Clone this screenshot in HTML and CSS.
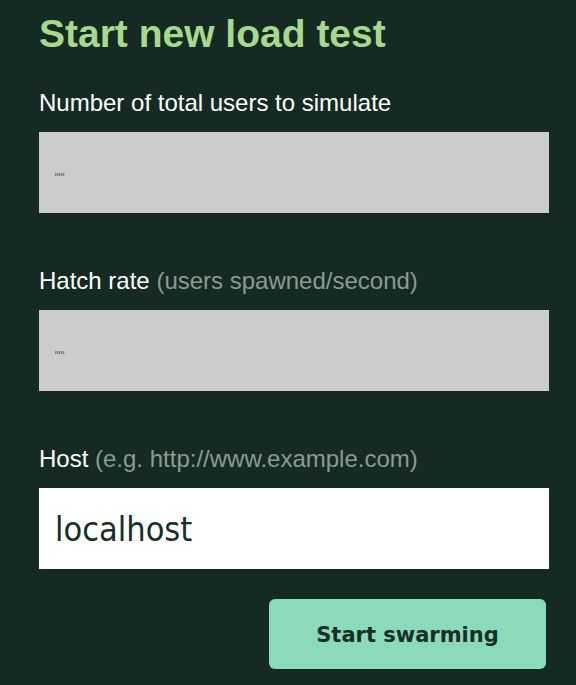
FILE: index.html
```html
<!DOCTYPE html>
<html>
<head>
<meta charset="utf-8">
<link rel="stylesheet" href="styles.css">
</head>
<body>
<form class="form">
  <h2 class="title">Start new load test</h2>
  <label class="label label-first">Number of total users to simulate</label>
  <div class="field field-grey"><span class="tiny"></span></div>
  <label class="label">Hatch rate <span class="hint">(users spawned/second)</span></label>
  <div class="field field-grey"><span class="tiny"></span></div>
  <label class="label">Host <span class="hint">(e.g. http://www.example.com)</span></label>
  <div class="field field-white"><span class="value">localhost</span></div>
  <div class="actions"><button type="button" class="btn">Start swarming</button></div>
</form>
</body>
</html>
```
FILE: styles.css
```css
html, body {
  margin: 0;
  padding: 0;
  background: #152a22;
}
body {
  width: 576px;
  height: 685px;
  overflow: hidden;
}
.form {
  display: flex;
  flex-direction: column;
  width: 510px;
  padding: 11px 0 0 39px;
  font-family: "Liberation Sans", Arial, sans-serif;
}
.title {
  margin: 0;
  font-size: 39px;
  line-height: 46px;
  font-weight: bold;
  color: #a6d98b;
}
.label {
  display: block;
  margin: 54px 0 15px;
  font-size: 24px;
  line-height: 28px;
  color: #ffffff;
}
.label-first {
  margin-top: 32px;
}
.hint {
  color: #8a9b91;
}
.field {
  height: 81px;
  box-sizing: border-box;
  display: flex;
  align-items: center;
  padding-left: 16px;
}
.field-grey {
  background: #cccccc;
}
.field-white {
  background: #ffffff;
}
.tiny {
  display: block;
  width: 10px;
  height: 3px;
  margin-top: 3px;
  background: repeating-linear-gradient(90deg, #6f8a7d 0 1px, #a9b5ae 1px 2px);
}
.value {
  font-family: "DejaVu Sans Condensed", "DejaVu Sans", Verdana, sans-serif;
  font-stretch: condensed;
  font-size: 34px;
  color: #163026;
}
.actions {
  display: flex;
  justify-content: flex-end;
  padding-right: 3px;
  margin-top: 30px;
}
.btn {
  width: 277px;
  height: 70px;
  padding: 2px 0 0;
  border: 0;
  border-radius: 6px;
  background: #8bdbbb;
  color: #163026;
  font-family: "DejaVu Sans", Verdana, sans-serif;
  font-weight: bold;
  font-size: 21px;
  cursor: pointer;
}
```
